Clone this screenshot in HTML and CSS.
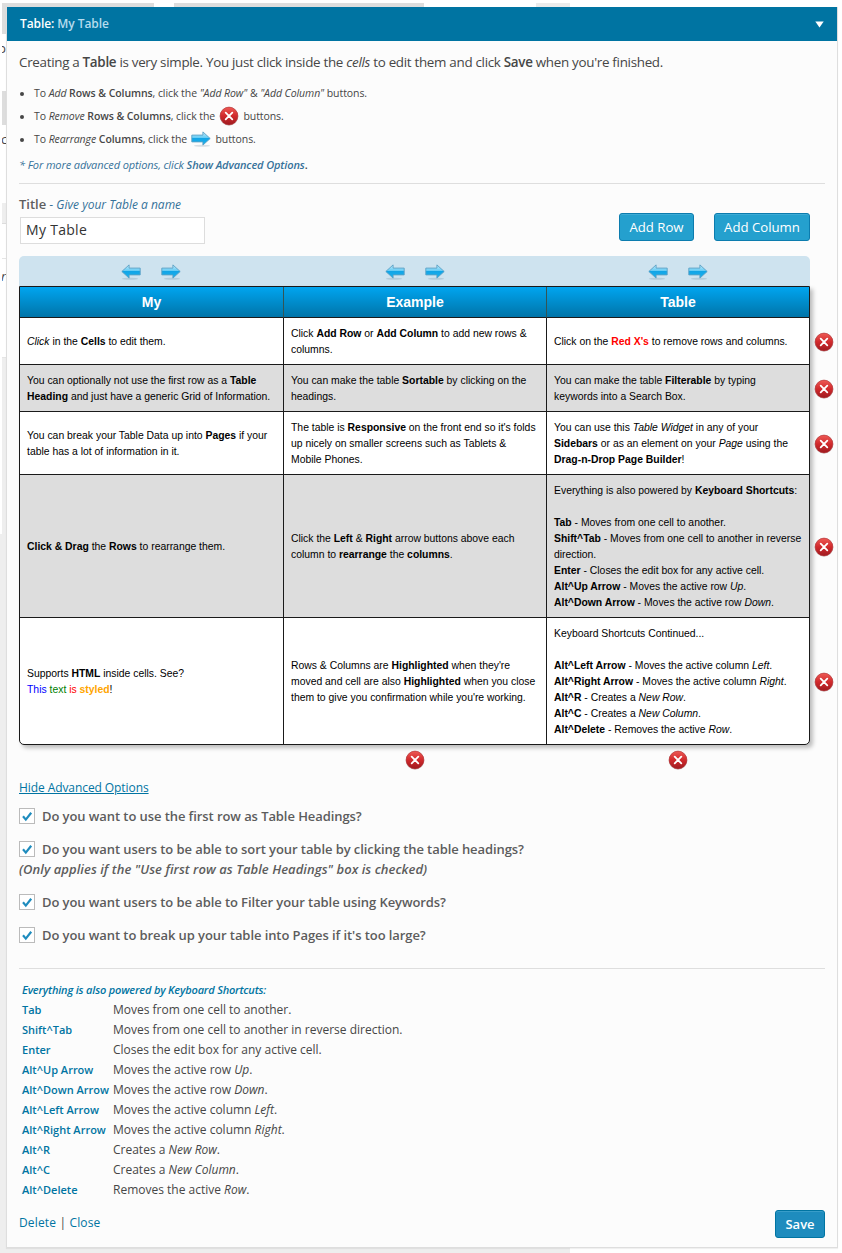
FILE: index.html
```html
<!DOCTYPE html>
<html lang="en">
<head>
<meta charset="utf-8">
<title>Table: My Table</title>
<link rel="stylesheet" href="styles.css">
</head>
<body>
<svg class="defs" aria-hidden="true">
  <defs>
    <linearGradient id="red" x1="0" y1="0" x2="0" y2="1"><stop offset="0" stop-color="#ee5a55"/><stop offset=".5" stop-color="#d1292c"/><stop offset="1" stop-color="#9e1b20"/></linearGradient>
    <linearGradient id="blue" x1="0" y1="0" x2="0" y2="1"><stop offset="0" stop-color="#c5edfc"/><stop offset=".48" stop-color="#5cc8f3"/><stop offset=".5" stop-color="#12a5e6"/><stop offset="1" stop-color="#1cb2ee"/></linearGradient>
    <symbol id="remove" viewBox="0 0 20 20">
      <circle cx="10" cy="10.4" r="9.3" fill="#000" opacity=".16"/>
      <circle cx="10" cy="10" r="8.9" fill="url(#red)" stroke="#b0282b" stroke-width=".6"/>
      <path d="M6.7 6.7l6.6 6.6M13.3 6.7l-6.6 6.6" stroke="#fff" stroke-width="1.8" stroke-linecap="round"/>
    </symbol>
    <symbol id="arrow" viewBox="0 0 20 16">
      <ellipse cx="11" cy="14.8" rx="8" ry="1" fill="#5d7d90" opacity=".22"/>
      <path d="M.8 4.1H11.9V.9L19.2 7.5 11.9 14.1V10.9H.8Z" fill="url(#blue)" stroke="#5a9fc4" stroke-width=".9" stroke-linejoin="round"/>
    </symbol>
  </defs>
</svg>

<div class="backdrop" aria-hidden="true">
  <div class="topstrip"><i></i><i></i><i></i></div>
  <div class="edge">
    <div class="e1"></div><div class="e2"><span>p</span></div><div class="e3"></div><div class="e4"><span>c</span></div><div class="e5"></div><div class="e6"></div><div class="e7"><em>r</em></div><div class="e8"></div><div class="e9"></div>
  </div>
  <div class="foot"></div>
</div>

<main class="panel">
  <header class="bar"><h1>Table: <span>My Table</span></h1><svg width="9" height="7" viewBox="0 0 9 7"><path d="M.3.5h8.4L4.5 6.6z" fill="#fff"/></svg></header>

  <section class="intro">
    <p class="lead">Creating a <b>Table</b> is very simple. You just click inside the <i>cells</i> to edit them and click <b>Save</b> when you're finished.</p>
    <ul>
      <li>To <i>Add</i> <b>Rows &amp; Columns</b>, click the <i>"Add Row"</i> &amp; <i>"Add Column"</i> buttons.</li>
      <li>To <i>Remove</i> <b>Rows &amp; Columns</b>, click the <svg class="x"><use href="#remove"/></svg> buttons.</li>
      <li>To <i>Rearrange</i> <b>Columns</b>, click the <svg class="ar"><use href="#arrow"/></svg> buttons.</li>
    </ul>
    <p class="more"><i>* For more advanced options, click <b>Show Advanced Options</b></i><b class="dot">.</b></p>
  </section>

  <section class="titlebar">
    <div class="field">
      <label for="t"><b>Title</b> - <i>Give your Table a name</i></label>
      <input id="t" type="text" value="My Table">
    </div>
    <div class="buttons"><button class="btn">Add Row</button><button class="btn">Add Column</button></div>
  </section>

  <section class="editor">
    <div class="movers">
      <div><svg class="ar left"><use href="#arrow"/></svg><svg class="ar"><use href="#arrow"/></svg></div>
      <div><svg class="ar left"><use href="#arrow"/></svg><svg class="ar"><use href="#arrow"/></svg></div>
      <div><svg class="ar left"><use href="#arrow"/></svg><svg class="ar"><use href="#arrow"/></svg></div>
    </div>
    <div class="gridwrap">
      <table class="data">
        <colgroup><col class="c1"><col class="c2"><col class="c3"></colgroup>
        <thead><tr><th>My</th><th>Example</th><th>Table</th></tr></thead>
        <tbody>
          <tr class="h47">
            <td><i>Click</i> in the <b>Cells</b> to edit them.</td>
            <td>Click <b>Add Row</b> or <b>Add Column</b> to add new rows &amp;<br>columns.</td>
            <td>Click on the <b class="red">Red X's</b> to remove rows and columns.</td>
          </tr>
          <tr class="h47">
            <td>You can optionally not use the first row as a <b>Table<br>Heading</b> and just have a generic Grid of Information.</td>
            <td>You can make the table <b>Sortable</b> by clicking on the<br>headings.</td>
            <td>You can make the table <b>Filterable</b> by typing<br>keywords into a Search Box.</td>
          </tr>
          <tr class="h63">
            <td>You can break your Table Data up into <b>Pages</b> if your<br>table has a lot of information in it.</td>
            <td>The table is <b>Responsive</b> on the front end so it's folds<br>up nicely on smaller screens such as Tablets &amp;<br>Mobile Phones.</td>
            <td>You can use this <i>Table Widget</i> in any of your<br><b>Sidebars</b> or as an element on your <i>Page</i> using the<br><b>Drag-n-Drop Page Builder</b>!</td>
          </tr>
          <tr class="h143">
            <td><b>Click &amp; Drag</b> the <b>Rows</b> to rearrange them.</td>
            <td>Click the <b>Left</b> &amp; <b>Right</b> arrow buttons above each<br>column to <b>rearrange</b> the <b>columns</b>.</td>
            <td>Everything is also powered by <b>Keyboard Shortcuts</b>:<br><br><b>Tab</b> - Moves from one cell to another.<br><b>Shift^Tab</b> - Moves from one cell to another in reverse<br>direction.<br><b>Enter</b> - Closes the edit box for any active cell.<br><b>Alt^Up Arrow</b> - Moves the active row <i>Up</i>.<br><b>Alt^Down Arrow</b> - Moves the active row <i>Down</i>.</td>
          </tr>
          <tr class="h126">
            <td>Supports <b>HTML</b> inside cells. See?<br><span class="blue">This</span> <span class="green">text</span> <span class="red">is</span> <b class="orange">styled</b>!</td>
            <td>Rows &amp; Columns are <b>Highlighted</b> when they're<br>moved and cell are also <b>Highlighted</b> when you close<br>them to give you confirmation while you're working.</td>
            <td>Keyboard Shortcuts Continued...<br><br><b>Alt^Left Arrow</b> - Moves the active column <i>Left</i>.<br><b>Alt^Right Arrow</b> - Moves the active column <i>Right</i>.<br><b>Alt^R</b> - Creates a <i>New Row</i>.<br><b>Alt^C</b> - Creates a <i>New Column</i>.<br><b>Alt^Delete</b> - Removes the active <i>Row</i>.</td>
          </tr>
        </tbody>
      </table>
      <div class="rowx">
        <svg class="x"><use href="#remove"/></svg><svg class="x"><use href="#remove"/></svg><svg class="x"><use href="#remove"/></svg><svg class="x"><use href="#remove"/></svg><svg class="x"><use href="#remove"/></svg>
      </div>
    </div>
    <div class="colx"><span></span><svg class="x"><use href="#remove"/></svg><svg class="x"><use href="#remove"/></svg></div>
  </section>

  <section class="options">
    <a class="toggle">Hide Advanced Options</a>
    <div class="opt"><svg class="cb" viewBox="0 0 16 16"><rect x=".5" y=".5" width="15" height="15" fill="#fff" stroke="#bbb"/><path d="M4 8.3L6.8 11.6 12.2 4.7" fill="none" stroke="#1e8cbe" stroke-width="2.2"/></svg>Do you want to use the first row as Table Headings?</div>
    <div class="opt"><svg class="cb" viewBox="0 0 16 16"><rect x=".5" y=".5" width="15" height="15" fill="#fff" stroke="#bbb"/><path d="M4 8.3L6.8 11.6 12.2 4.7" fill="none" stroke="#1e8cbe" stroke-width="2.2"/></svg>Do you want users to be able to sort your table by clicking the table headings?</div>
    <div class="note">(Only applies if the "Use first row as Table Headings" box is checked)</div>
    <div class="opt"><svg class="cb" viewBox="0 0 16 16"><rect x=".5" y=".5" width="15" height="15" fill="#fff" stroke="#bbb"/><path d="M4 8.3L6.8 11.6 12.2 4.7" fill="none" stroke="#1e8cbe" stroke-width="2.2"/></svg>Do you want users to be able to Filter your table using Keywords?</div>
    <div class="opt"><svg class="cb" viewBox="0 0 16 16"><rect x=".5" y=".5" width="15" height="15" fill="#fff" stroke="#bbb"/><path d="M4 8.3L6.8 11.6 12.2 4.7" fill="none" stroke="#1e8cbe" stroke-width="2.2"/></svg>Do you want to break up your table into Pages if it's too large?</div>
  </section>

  <section class="keys">
    <h2>Everything is also powered by Keyboard Shortcuts:</h2>
    <dl>
      <dt>Tab</dt><dd>Moves from one cell to another.</dd>
      <dt>Shift^Tab</dt><dd>Moves from one cell to another in reverse direction.</dd>
      <dt>Enter</dt><dd>Closes the edit box for any active cell.</dd>
      <dt>Alt^Up Arrow</dt><dd>Moves the active row <i>Up</i>.</dd>
      <dt>Alt^Down Arrow</dt><dd>Moves the active row <i>Down</i>.</dd>
      <dt>Alt^Left Arrow</dt><dd>Moves the active column <i>Left</i>.</dd>
      <dt>Alt^Right Arrow</dt><dd>Moves the active column <i>Right</i>.</dd>
      <dt>Alt^R</dt><dd>Creates a <i>New Row</i>.</dd>
      <dt>Alt^C</dt><dd>Creates a <i>New Column</i>.</dd>
      <dt>Alt^Delete</dt><dd>Removes the active <i>Row</i>.</dd>
    </dl>
  </section>

  <footer class="actions"><div><a>Delete</a> | <a>Close</a></div><button class="btn save">Save</button></footer>
</main>
</body>
</html>
```
FILE: styles.css
```css
* { box-sizing: border-box; }
html, body { margin: 0; height: 1253px; overflow: hidden; }
body { position: relative; width: 842px; background: #fff; color: #464646; font: 13px/20px "Open Sans", sans-serif; }
b { font-weight: 600; }
p, ul, dl, dd, h1, h2 { margin: 0; padding: 0; }
.defs { position: absolute; width: 0; height: 0; }

.backdrop { position: absolute; inset: 0; display: flex; flex-direction: column; padding-top: 3px; }
.topstrip { display: flex; height: 4px; gap: 20px; padding-left: 2px; flex: none; }
.topstrip i { background: #ddd; width: 152px; }
.topstrip i:nth-child(2) { width: 250px; }
.topstrip i:nth-child(3) { width: 34px; margin-left: 92px; background: #ebebeb; }
.edge { width: 7px; font-size: 13px; line-height: 16px; }
.edge div { margin-left: 2px; overflow: hidden; }
.edge span, .edge em { display: block; margin-left: -4px; }
.e1 { height: 27px; background: #ddd; }
.e2 { height: 57px; padding-top: 6px; }
.e3 { height: 34px; background: #ddd; }
.e4 { height: 78px; padding-top: 6px; }
.edge .e4 span { margin-left: -1px; }
.e5 { height: 21px; background: #eee; border-bottom: 1px solid #ddd; }
.e6 { height: 35px; border-bottom: 1px solid #e5e5e5; }
.e7 { height: 99px; padding-top: 9px; border-bottom: 1px solid #e5e5e5; }
.edge .e7 em { margin-left: -1px; }
.e8 { height: 176px; background: #eee; }
.edge .e9 { height: 719px; margin-left: 0; background: #eee; }
.foot { position: absolute; left: 0; bottom: 0; width: 570px; height: 5px; background: #eee; }

.panel { position: relative; margin: 0 0 0 6px; top: 7px; width: 832px; height: 1241px; display: flex; flex-direction: column; background: #fcfcfc; border: 1px solid #dedede; border-top: 0; box-shadow: 0 1px 1px rgba(0,0,0,.06); }
.bar { flex: none; height: 34px; background: #0074a2; display: flex; align-items: center; justify-content: space-between; padding: 0 13px 0 13px; }
.bar h1 { font-size: 12px; font-weight: 600; color: #fff; letter-spacing: -.08px; }
.bar span { color: #b5dcee; }

.intro { flex: none; margin: 0 12px; height: 143px; border-bottom: 1px solid #dedede; padding-top: 11px; white-space: nowrap; }
.lead { font-size: 13.4px; line-height: 20px; letter-spacing: -.3px; }
.intro ul { list-style: none; font-size: 10.5px; letter-spacing: -.07px; margin-top: 10px; }
.intro li { position: relative; height: 23px; line-height: 23px; padding-left: 15px; }
.intro li::before { content: ""; position: absolute; left: 1px; top: 10px; width: 4px; height: 4px; border-radius: 50%; background: #464646; }
.x { width: 20px; height: 20px; display: block; }
.ar { width: 20px; height: 16px; display: block; }
.ar.left { transform: scaleX(-1); }
.intro .x, .intro .ar { display: inline-block; vertical-align: top; margin: 1px 2px 0 1px; }
.intro .ar { margin-top: 3px; }
.more { font-size: 11px; line-height: 20px; letter-spacing: -.11px; margin-top: 4px; color: #36729a; }
.dot { color: #464646; }

.titlebar { flex: none; height: 72px; padding: 10px 27px 0 12px; display: flex; justify-content: space-between; }
.field { display: flex; flex-direction: column; }
label { font-size: 12px; line-height: 20px; color: #36729a; }
label b { font-size: 13px; color: #5e5e5e; }
.field input { margin: 2px 0 0 1px; width: 185px; height: 27px; border: 1px solid #ddd; background: #fff; padding: 0 5px 2px; font: 14px "Open Sans", sans-serif; letter-spacing: .3px; color: #333; }
.buttons { display: flex; gap: 20px; padding-top: 19px; }
.btn { height: 28px; padding: 0; width: 75px; border: 1px solid #0c7cae; border-radius: 3px; background: #24a0ce; color: #fff; font: 500 13.2px "Open Sans", sans-serif; box-shadow: inset 0 1px 0 rgba(120,200,230,.3); }
.buttons .btn + .btn { width: 96px; }

.editor { flex: none; margin-left: 12px; }
.movers { width: 791px; height: 30px; background: #cee3ef; border-radius: 5px 5px 0 0; display: grid; grid-template-columns: 264px 263px 264px; }
.movers div { display: flex; justify-content: center; align-items: center; gap: 20px; padding-top: 1px; }
.gridwrap { display: flex; }
.data { width: 791px; height: 459px; table-layout: fixed; border-collapse: separate; border-spacing: 0; border: 1px solid #1a1a1a; border-radius: 0 0 5px 5px; box-shadow: 3px 3px 4px rgba(0,0,0,.25); background: #fff; font: 10.4px/16px "Liberation Sans", Arial, sans-serif; color: #000; overflow: hidden; }
.c1 { width: 264px; } .c2 { width: 263px; } .c3 { width: 262px; }
.data b { font-weight: 700; }
.data th { height: 31px; padding: 0; color: #fff; font-size: 14px; background: linear-gradient(#00a5f0, #0074a8); border-right: 1px solid #355; border-bottom: 1px solid #1a1a1a; }
.data td { padding: 1px 0 0 7px; border-right: 1px solid #1a1a1a; border-bottom: 1px solid #1a1a1a; white-space: nowrap; vertical-align: middle; }
.data tr > :last-child { border-right: 0; }
.data tr:last-child td { border-bottom: 0; }
.data tbody tr:nth-child(even) { background: #ddd; }
.h47 { height: 47px; } .h63 { height: 63px; } .h143 { height: 143px; } .h126 { height: 126px; }
.data .red { color: red; } .blue { color: #00f; } .green { color: green; } .orange { color: orange; }
.rowx { display: grid; grid-template-rows: 47px 47px 63px 143px 127px; padding: 32px 0 0 4px; align-items: center; }
.colx { display: grid; grid-template-columns: 264px 263px 263px; justify-items: center; height: 33px; padding-top: 5px; }

.options { flex: none; padding: 0 12px; height: 190px; color: #5c5c5c; font-size: 13px; font-weight: 600; letter-spacing: -.08px; }
.toggle { display: block; margin-bottom: 8px; color: #0074a2; font-size: 12px; font-weight: 400; text-decoration: underline; }
.opt { height: 20px; margin-bottom: 13px; display: flex; align-items: center; gap: 7px; white-space: nowrap; }
.cb { width: 16px; height: 16px; flex: none; }
.note { margin: -13px 0 13px; font-style: italic; letter-spacing: .05px; white-space: nowrap; }

.keys { flex: none; margin: 0 12px; border-top: 1px solid #dedede; padding: 11px 3px 0; height: 242px; }
.keys h2 { font-size: 11px; line-height: 20px; letter-spacing: -.17px; font-style: italic; font-weight: 600; color: #0074a2; white-space: nowrap; }
.keys dl { display: grid; grid-template-columns: 91px 1fr; grid-auto-rows: 20px; font-size: 12px; white-space: nowrap; }
.keys dt { font-size: 11px; font-weight: 600; color: #0074a2; }

.actions { flex: none; display: flex; justify-content: space-between; align-items: flex-start; padding: 0 12px; height: 28px; font-size: 12px; line-height: 26px; letter-spacing: .15px; }
.actions a { color: #0074a2; }
.btn.save { width: 50px; background: #1e8cbe; border-color: #0074a2; font-weight: 600; font-size: 13px; }
```
